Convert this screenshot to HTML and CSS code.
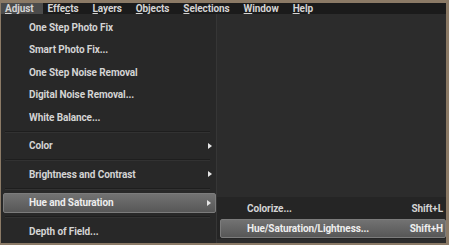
FILE: index.html
```html
<!DOCTYPE html>
<html lang="en">
<head>
    <meta charset="UTF-8">
    <title>Adjust Menu</title>
    <link rel="stylesheet" href="styles.css">
</head>
<body>

    <div class="frame">
        <nav class="menubar">
            <span class="menu-title open"><u>A</u>djust</span>
            <span class="menu-title">Effe<u>c</u>ts</span>
            <span class="menu-title"><u>L</u>ayers</span>
            <span class="menu-title"><u>O</u>bjects</span>
            <span class="menu-title"><u>S</u>elections</span>
            <span class="menu-title"><u>W</u>indow</span>
            <span class="menu-title"><u>H</u>elp</span>
        </nav>

        <div class="workspace">
            <ul class="dropdown">
                <li class="item">One Step Photo Fix</li>
                <li class="item">Smart Photo Fix...</li>
                <li class="item">One Step Noise Removal</li>
                <li class="item">Digital Noise Removal...</li>
                <li class="item">White Balance...</li>
                <li class="sep"></li>
                <li class="item has-sub">Color</li>
                <li class="sep"></li>
                <li class="item has-sub">Brightness and Contrast</li>
                <li class="sep"></li>
                <li class="item has-sub active">Hue and Saturation</li>
                <li class="sep"></li>
                <li class="item">Depth of Field...</li>
            </ul>

            <!-- submenu of Hue and Saturation -->
            <ul class="submenu">
                <li class="item"><span>Colorize...</span><span class="key">Shift+L</span></li>
                <li class="item active"><span>Hue/Saturation/Lightness...</span><span class="key">Shift+H</span></li>
            </ul>
        </div>
    </div>

</body>
</html>
```

FILE: styles.css
```css
/* General */
body {
    margin: 0;
    width: 449px;
    height: 245px;
    overflow: hidden;
    background-color: #8b7a66;
    font-family: Roboto, 'Liberation Sans', Arial, sans-serif;
    font-size: 10px;
    font-weight: bold;
    letter-spacing: -0.1px;
    color: #d4d4d4;
}

ul {
    list-style: none;
    margin: 0;
    padding: 0;
}

.frame {
    padding: 3px 3px 0 1px;
    height: 239px;
    display: flex;
    flex-direction: column;
    position: relative;
}

/* Menu bar */
.menubar {
    display: flex;
    height: 17px;
    background-color: #1b1b1b;
}

.menu-title {
    display: flex;
    align-items: center;
    padding: 0 10px 0 4px;
}

.menu-title.open {
    background-color: #4b4b4b;
}

/* Workspace + dropdown */
.workspace {
    flex-grow: 1;
    display: flex;
    background-color: #2c2c2c;
}

.dropdown {
    width: 215px;
    padding-top: 2px;
    background-color: #282828;
    border-right: 1px solid #363636;
}

.item {
    height: 22.5px;
    display: flex;
    align-items: center;
    padding-left: 28px;
    position: relative;
}

.has-sub::after {
    content: "";
    position: absolute;
    right: 4px;
    top: 50%;
    margin-top: -3px;
    border-left: 4px solid #e6e6e6;
    border-top: 3px solid transparent;
    border-bottom: 3px solid transparent;
}

.sep {
    height: 6px;
    position: relative;
}

.sep::before {
    content: "";
    position: absolute;
    left: 4px;
    right: 6px;
    top: 2px;
    border-top: 1px solid #1e1e1e;
    border-bottom: 1px solid #323232;
}

.active {
    margin: 1px 0 1px 2px;
    padding-left: 25px;
    background: linear-gradient(#727272, #575757);
    border: 1px solid #7c7c7c;
    border-radius: 2px;
    box-sizing: content-box;
    height: 18.5px;
    color: #eeeeee;
}

/* Submenu popup */
.submenu {
    position: absolute;
    left: 217px;
    top: 197px;
    width: 229px;
    padding-top: 1px;
    background-color: #252525;
}

.submenu .item {
    height: 21px;
    justify-content: space-between;
    padding: 0 3px 0 30px;
}

.submenu .item.active {
    margin: 0 0 1px 3px;
    height: 17px;
    padding: 0 2px 0 26px;
}
```
